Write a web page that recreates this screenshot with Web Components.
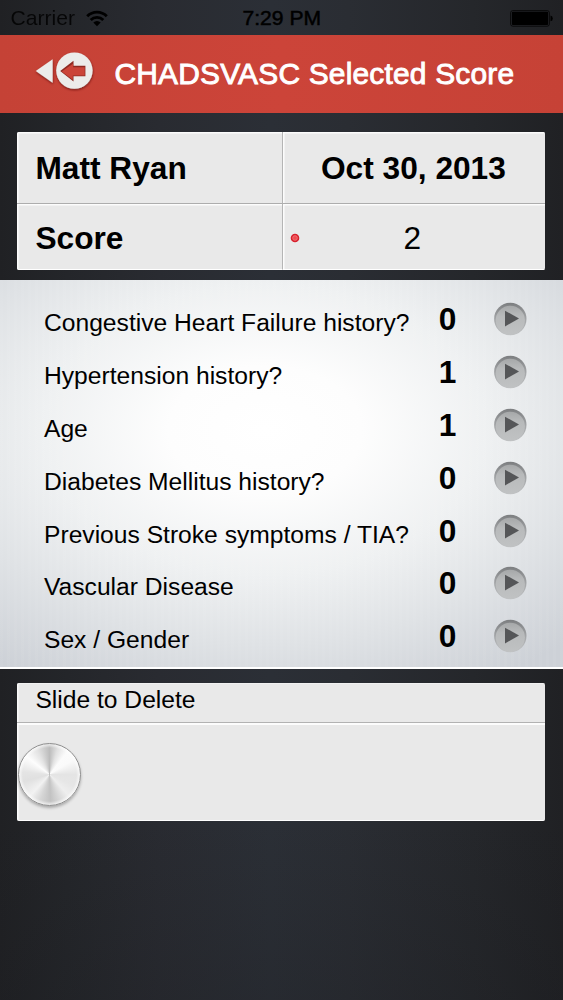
<!DOCTYPE html>
<html lang="en">
<head>
<meta charset="utf-8">
<title>CHADSVASC Selected Score</title>
<style>
  html, body {
    margin: 0;
    height: 100%;
    overflow: hidden;
  }

  body {
    font-family: "Liberation Sans", Arial, Helvetica, sans-serif;
    color: #000;
  }
</style>
</head>
<body>
<score-app>
  <status-bar slot="status" carrier="Carrier" time="7:29 PM"></status-bar>
  <nav-header slot="header">CHADSVASC Selected Score</nav-header>
  <score-summary>
    <span slot="name">Matt Ryan</span>
    <span slot="date">Oct 30, 2013</span>
    <span slot="label">Score</span>
    <span slot="score">2</span>
  </score-summary>
  <score-list>
    <score-row value="0">Congestive Heart Failure history?</score-row>
    <score-row value="1">Hypertension history?</score-row>
    <score-row value="1">Age</score-row>
    <score-row value="0">Diabetes Mellitus history?</score-row>
    <score-row value="0">Previous Stroke symptoms / TIA?</score-row>
    <score-row value="0">Vascular Disease</score-row>
    <score-row value="0">Sex / Gender</score-row>
  </score-list>
  <slide-panel>Slide to Delete</slide-panel>
</score-app>

<script>
/**
 * Base class: attaches an open shadow root and fills it from `render()`.
 */
class BaseElement extends HTMLElement {
  connectedCallback() {
    if (!this.shadowRoot) {
      this.attachShadow({ mode: "open" }).innerHTML = this.render();
    }
  }
}

/** Page frame with the dark backdrop. */
class ScoreApp extends BaseElement {
  render() {
    return `<style>
      :host {
        display: flex;
        flex-direction: column;
        height: 1000px;
        background:
          linear-gradient(to bottom, transparent 82%, rgba(26, 27, 31, .25)),
          linear-gradient(to right, #202124 0%, #24262a 12%, #292b31 28%, #2b2f36 48%, #2a2d33 62%, #25272b 84%, #202124 100%);
      }
      </style>
      <slot name="status"></slot>
      <slot name="header"></slot>
      <slot></slot>`;
  }
}
customElements.define("score-app", ScoreApp);

class StatusBar extends BaseElement {
  render() {
    return `<style>
      :host {
        display: grid;
        grid-template-columns: 1fr auto 1fr;
        align-items: center;
        height: 35px;
        padding: 1px 10px 0 10.5px;
        box-sizing: border-box;
        font-size: 21.1px;
        line-height: 34px;
      }
      .carrier { display: flex; align-items: center; gap: 11px; }
      .name { opacity: .82; }
      .time { -webkit-text-stroke: .5px #000; }
      .battery { justify-self: end; }
      svg { display: block; }
      </style>
      <div class="carrier">
        <span class="name">${this.getAttribute("carrier")}</span>
        <svg width="22" height="17" viewBox="0 0 22 17">
          <g fill="none" stroke="#000" stroke-width="2.9">
            <path d="M1.2 6.2A13.8 13.8 0 0 1 20.8 6.2"/>
            <path d="M4.7 10A8.9 8.9 0 0 1 17.3 10"/>
          </g>
          <path d="M11 16.2L7.3 12.5A5.2 5.2 0 0 1 14.7 12.5Z"/>
        </svg>
      </div>
      <span class="time">${this.getAttribute("time")}</span>
      <svg class="battery" width="43" height="17" viewBox="0 0 43 17">
        <rect x=".6" y=".6" width="38.8" height="15.6" rx="2.2" fill="none" stroke="#000" stroke-width="1" opacity=".75"/>
        <rect x="1.9" y="1.8" width="36.2" height="13.2" rx="1"/>
        <path d="M40.5 5.5Q42.8 6 42.8 8.4T40.5 11.3Z"/>
      </svg>`;
  }
}
customElements.define("status-bar", StatusBar);

class NavHeader extends BaseElement {
  render() {
    return `<style>
      :host {
        display: flex;
        align-items: center;
        height: 77.5px;
        flex: none;
        padding-left: 34px;
        box-sizing: border-box;
        background: linear-gradient(to right, #c54236, #cc4439 50%, #c64236);
        color: #fff;
        font-size: 29.92px;
        white-space: nowrap;
      }
      svg { flex: none; margin-top: -6px; }
      .title {
        margin-left: 19.5px;
        letter-spacing: .2px;
        -webkit-text-stroke: .9px #fff;
      }
      </style>
      <svg width="61" height="42" viewBox="0 0 61 42">
        <defs>
          <filter id="s" x="-20%" y="-20%" width="140%" height="140%">
            <feDropShadow dx=".3" dy="1.2" stdDeviation=".8" flood-color="#5c1510" flood-opacity=".75"/>
          </filter>
        </defs>
        <g fill="#ececea" filter="url(#s)">
          <path d="M1.8 21L18.6 9.3V32.7Z"/>
          <circle cx="40.4" cy="20.6" r="18.2"/>
        </g>
        <path d="M26.2 21.1L39.5 10.7V15.8H51.4V26.2H39.5V31.4Z" fill="#8e2a22"/>
        <path d="M27.7 21.6L39.2 13.4V17.2H50.7V25.5H38.8V29.8Z" fill="#cb4539"/>
      </svg>
      <span class="title"><slot></slot></span>`;
  }
}
customElements.define("nav-header", NavHeader);

/** Two by two card: name, date, label and total score. */
class ScoreSummary extends BaseElement {
  render() {
    return `<style>
      :host {
        display: grid;
        grid-template-columns: 265.5px 1fr;
        grid-template-rows: 72px 1fr;
        flex: none;
        height: 138px;
        margin: 19.5px 17.6px 10px 17.4px;
        box-sizing: border-box;
        border-radius: 2px;
        overflow: hidden;
        background: #e9e9e9;
        font-size: 31.68px;
        font-weight: bold;
        line-height: 1;
      }
      div {
        display: flex;
        align-items: center;
        box-sizing: border-box;
        box-shadow: inset 2px 2px 0 -.5px #fcfcfc;
      }
      .left { padding-left: 18px; border-right: 1.5px solid #b5b5b5; }
      .top { border-bottom: 1.5px solid #adadad; padding-top: 2px; }
      .right { justify-content: center; padding-right: 1.5px; }
      .bottom { border-bottom: 1px solid #fff; padding-top: 4px; }
      .score { justify-content: flex-start; }
      .score span { flex: 1; text-align: center; font-weight: normal; padding-right: 21px; }
      svg { flex: none; margin-left: 7.5px; margin-top: -2px; }
      </style>
      <div class="left top"><slot name="name"></slot></div>
      <div class="right top"><slot name="date"></slot></div>
      <div class="left bottom"><slot name="label"></slot></div>
      <div class="score bottom">
        <svg width="10" height="10" viewBox="0 0 10 10">
          <circle cx="5" cy="5" r="4.3" fill="#d8202c"/>
          <circle cx="5" cy="5" r="2.4" fill="#f04c50" stroke="#f08a8c" stroke-width=".6"/>
        </svg>
        <span><slot name="score"></slot></span>
      </div>`;
  }
}
customElements.define("score-summary", ScoreSummary);

class ScoreList extends BaseElement {
  render() {
    return `<style>
      :host {
        display: block;
        flex: none;
        height: 389px;
        padding-top: 13px;
        box-sizing: border-box;
        border-bottom: 2px solid #fff;
        background:
          repeating-linear-gradient(to right, rgba(255, 255, 255, .04) 0 3px, transparent 3px 7px),
          radial-gradient(ellipse 440px 290px at 265px 150px, #fff 0%, #fdfdfd 22%, #eff1f2 50%, #dfe2e5 74%, #cdd1d7 100%);
      }
      </style>
      <slot></slot>`;
  }
}
customElements.define("score-list", ScoreList);

class ScoreRow extends BaseElement {
  render() {
    return `<style>
      :host {
        display: grid;
        grid-template-columns: 385.5px 36px 1fr;
        align-items: center;
        height: 52.8px;
        padding-left: 44px;
        box-sizing: border-box;
        line-height: 36px;
      }
      .label { font-size: 24.64px; padding-top: 8px; white-space: nowrap; }
      .value { font-size: 31.68px; font-weight: bold; text-align: center; padding-top: 0; }
      svg { display: block; margin-left: 26.5px; }
      </style>
      <span class="label"><slot></slot></span>
      <span class="value">${this.getAttribute("value")}</span>
      <svg width="36" height="36" viewBox="0 0 36 36">
        <defs>
          <linearGradient id="rim" x2="0" y2="1">
            <stop offset="0" stop-color="#7c7e80"/>
            <stop offset=".5" stop-color="#a3a5a7"/>
            <stop offset="1" stop-color="#c0c2c4"/>
          </linearGradient>
          <linearGradient id="face" x2="0" y2="1">
            <stop offset="0" stop-color="#a6a8a9"/>
            <stop offset=".35" stop-color="#b8babb"/>
            <stop offset="1" stop-color="#c0c2c3"/>
          </linearGradient>
        </defs>
        <circle cx="18.3" cy="18" r="16.2" fill="url(#rim)"/>
        <circle cx="18.3" cy="19.3" r="14.6" fill="url(#face)"/>
        <path d="M13 9.7L27 17.4L13 25.4Z" fill="#555658"/>
      </svg>`;
  }
}
customElements.define("score-row", ScoreRow);

/** Card with a caption and a brushed metal knob to drag. */
class SlidePanel extends BaseElement {
  render() {
    return `<style>
      :host {
        display: flex;
        flex-direction: column;
        flex: none;
        height: 138px;
        margin: 14px 17.6px 0 17.4px;
        box-sizing: border-box;
        border-radius: 2px;
        overflow: hidden;
        background: #e9e9e9;
        border-bottom: 1px solid #fff;
      }
      .caption {
        height: 40px;
        padding: 0 18px 6px;
        box-sizing: border-box;
        border-bottom: 1.5px solid #b2b2b2;
        font-size: 24.64px;
        line-height: 34px;
        box-shadow: inset 2px 1px 0 -.5px #fafafa;
      }
      .track {
        display: flex;
        align-items: center;
        flex: 1;
        padding-top: 6px;
        box-shadow: inset 1.5px 2px 0 #fcfcfc;
      }
      .knob {
        width: 63px;
        height: 63px;
        margin-left: .7px;
        box-sizing: border-box;
        border: 1.5px solid #8e8e8e;
        border-radius: 50%;
        background:
          radial-gradient(circle, transparent 62%, rgba(255, 255, 255, .6) 69%),
          conic-gradient(#bcbcbc 0deg, #e2e2e2 18deg, #fbfbfb 38deg, #fafafa 58deg, #e4e4e4 90deg,
            #e6e6e6 115deg, #eeeeee 138deg, #d6d6d6 160deg, #c2c2c2 178deg, #d6d6d6 200deg,
            #f2f2f2 222deg, #e0e0e0 255deg, #e4e4e4 275deg, #fdfdfd 308deg, #e2e2e2 334deg, #bcbcbc 360deg);
        box-shadow: 0 2px 3px rgba(0, 0, 0, .28);
      }
      </style>
      <div class="caption"><slot></slot></div>
      <div class="track"><div class="knob"></div></div>`;
  }
}
customElements.define("slide-panel", SlidePanel);
</script>
</body>
</html>
